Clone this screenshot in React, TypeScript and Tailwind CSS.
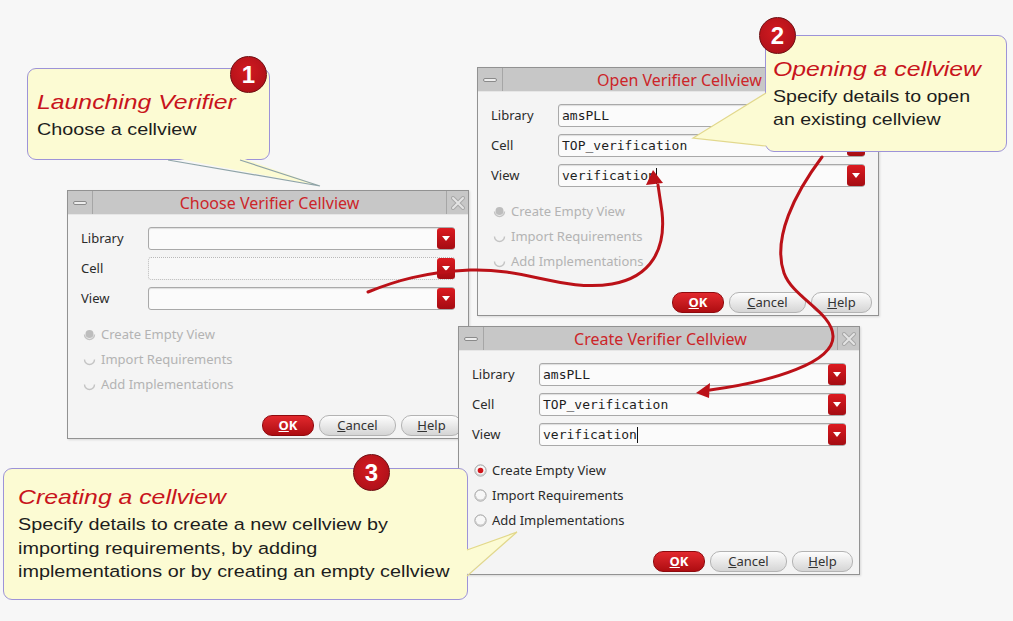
import React from "react";

type FieldProps = { label: string; value?: string; cursor?: boolean; dotted?: boolean };

function Field({ label, value, cursor, dotted }: FieldProps) {
  return (
    <div className="flex h-[23px] items-center">
      <div className="w-[67px] text-[13px] leading-none text-[#2b2b2b]">{label}</div>
      <div
        className={
          dotted
            ? "flex h-[23px] flex-1 items-center rounded-[3px] border border-dotted border-[#b8b8b8] bg-[#f8f8f8] pl-[3px]"
            : "flex h-[23px] flex-1 items-center rounded-[3px] border border-[#a9a9a9] bg-[#fbfbfb] pl-[3px] shadow-[inset_0_1px_1px_rgba(0,0,0,0.12)]"
        }
      >
        <span className="whitespace-pre font-['DejaVu_Sans_Mono',monospace] text-[13px] leading-none text-[#1e1e1e]">
          {value}
        </span>
        {cursor && <span className="h-[16px] w-px bg-[#111]" />}
        <div className="ml-auto mr-[-1px] flex h-[21px] w-[18px] items-center justify-center rounded-[3px] bg-linear-to-b from-[#dc1a20] to-[#a50c12]">
          <svg width="8" height="5" viewBox="0 0 8 5">
            <path d="M0 0H8L4 5Z" fill="#fff" />
          </svg>
        </div>
      </div>
    </div>
  );
}

function RadioIcon({ selected, disabled }: { selected?: boolean; disabled?: boolean }) {
  if (disabled) {
    return (
      <svg width="13" height="13" viewBox="0 0 13 13">
        <path d="M1.5 6.5 A5 5 0 0 0 11.5 6.5" fill="none" stroke="#c4c4c4" strokeWidth="1.4" />
        {selected && <circle cx="6.5" cy="6" r="4" fill="#bdbdbd" />}
      </svg>
    );
  }
  return (
    <svg width="13" height="13" viewBox="0 0 13 13">
      <circle cx="6.5" cy="6.5" r="5.6" fill="#f7f7f7" stroke="#9c9c9c" strokeWidth="1" />
      <path d="M1.6 7.2 A5 5 0 0 0 11.4 7.2" fill="none" stroke="#c9c9c9" strokeWidth="1.2" />
      {selected && <circle cx="6.5" cy="6.5" r="2.8" fill="#d0141a" />}
    </svg>
  );
}

function Radio({ label, selected, disabled }: { label: string; selected?: boolean; disabled?: boolean }) {
  return (
    <div className="flex h-[25px] items-center pl-[2px]">
      <RadioIcon selected={selected} disabled={disabled} />
      <span
        className={
          disabled
            ? "ml-[5px] text-[13px] leading-none text-[#b3b3b3]"
            : "ml-[5px] text-[13px] leading-none text-[#2b2b2b]"
        }
      >
        {label}
      </span>
    </div>
  );
}

function TitleBar({ title }: { title: string }) {
  return (
    <div className="flex h-[24px] border-b border-[#e6e6e6] bg-[#c7c7c7]">
      <div className="flex w-[25px] items-center justify-center border-r border-[#a6a6a6]">
        <div className="h-[4px] w-[14px] rounded-[2px] border border-[#8a8a8a] bg-[#ededed]" />
      </div>
      <div className="flex flex-1 items-center justify-center text-[16px] leading-none text-[#cc2529]">
        {title}
      </div>
      <div className="flex w-[22px] items-center justify-center border-l border-[#a6a6a6]">
        <svg width="14" height="14" viewBox="0 0 14 14">
          <path d="M2 2L12 12M12 2L2 12" stroke="#a9a9a9" strokeWidth="4" strokeLinecap="round" />
          <path d="M2 2L12 12M12 2L2 12" stroke="#e4e4e4" strokeWidth="2" strokeLinecap="round" />
        </svg>
      </div>
    </div>
  );
}

type DialogProps = {
  pos: string;
  title: string;
  lib?: string;
  cell?: string;
  view?: string;
  enabled?: boolean;
  cursor?: boolean;
  dottedCell?: boolean;
};

function Dialog({ pos, title, lib, cell, view, enabled, cursor, dottedCell }: DialogProps) {
  return (
    <div
      className={
        "absolute flex h-[249px] w-[402px] flex-col border border-[#929292] bg-[#f4f4f4] shadow-[1px_1px_2px_rgba(0,0,0,0.12)] " +
        pos
      }
    >
      <TitleBar title={title} />
      <div className="flex flex-1 flex-col px-[13px] pt-[12px]">
        <div className="flex flex-col gap-[7px]">
          <Field label="Library" value={lib} />
          <Field label="Cell" value={cell} dotted={dottedCell} />
          <Field label="View" value={view} cursor={cursor} />
        </div>
        <div className="mt-[12px] flex flex-col">
          <Radio label="Create Empty View" selected disabled={!enabled} />
          <Radio label="Import Requirements" disabled={!enabled} />
          <Radio label="Add Implementations" disabled={!enabled} />
        </div>
        <div className="mb-[2px] mr-[-7px] mt-auto flex justify-end gap-[5px]">
          <button className="flex h-[21px] w-[52px] items-center justify-center rounded-[10px] border border-[#8e0a0e] bg-linear-to-b from-[#e2282d] to-[#ae0c11] text-[13px] font-bold leading-none text-white">
            <span className="underline">O</span>K
          </button>
          <button className="flex h-[21px] w-[77px] items-center justify-center rounded-[10px] border border-[#b3b3b3] bg-linear-to-b from-[#fdfdfd] to-[#d5d5d5] text-[13px] leading-none text-[#333]">
            <span className="underline">C</span>ancel
          </button>
          <button className="flex h-[21px] w-[61px] items-center justify-center rounded-[10px] border border-[#b3b3b3] bg-linear-to-b from-[#fdfdfd] to-[#d5d5d5] text-[13px] leading-none text-[#333]">
            <span className="underline">H</span>elp
          </button>
        </div>
      </div>
    </div>
  );
}

function Badge({ pos, n }: { pos: string; n: string }) {
  return (
    <div
      className={
        "absolute flex h-[37px] w-[37px] items-center justify-center rounded-full border border-[#6e0d10] bg-[radial-gradient(circle_at_45%_40%,#d21a20,#b3121a_70%,#8c0c12)] font-['Liberation_Sans',Arial,sans-serif] text-[24px] font-bold leading-none text-white " +
        pos
      }
    >
      {n}
    </div>
  );
}

export default function App() {
  const callout = "absolute rounded-[9px] border border-[#9d93d8] bg-[#fcfbd3]";
  return (
    <div className="relative h-[621px] w-[1013px] overflow-hidden bg-[#f7f7f7] font-['Noto_Sans',sans-serif]">
      <Dialog pos="left-[67px] top-[190px]" title="Choose Verifier Cellview" dottedCell />
      <Dialog
        pos="left-[477px] top-[67px]"
        title="Open Verifier Cellview"
        lib="amsPLL"
        cell="TOP_verification"
        view="verification"
        cursor
      />
      <Dialog
        pos="left-[458px] top-[326px]"
        title="Create Verifier Cellview"
        lib="amsPLL"
        cell="TOP_verification"
        view="verification"
        cursor
        enabled
      />

      {/* Callout 1 */}
      <div className={callout + " left-[27px] top-[68px] h-[92px] w-[243px] pl-[9px] pt-[20px]"}>
        <div className="origin-left scale-x-[1.18] whitespace-nowrap font-['Liberation_Sans',Arial,sans-serif]">
          <div className="text-[21px] italic leading-[26px] text-[#c8141c]">Launching Verifier</div>
          <div className="mt-[3px] text-[16.8px] leading-[23px] text-[#1d1d1d]">Choose a cellview</div>
        </div>
      </div>

      {/* Callout 2 */}
      <div className={callout + " left-[765px] top-[35px] h-[117px] w-[242px] pl-[7px] pt-[20px]"}>
        <div className="origin-left scale-x-[1.18] whitespace-nowrap font-['Liberation_Sans',Arial,sans-serif]">
          <div className="text-[21px] italic leading-[26px] text-[#c8141c]">Opening a cellview</div>
          <div className="mt-[3px] text-[16.6px] leading-[23px] text-[#1d1d1d]">
            Specify details to open
            <br />
            an existing cellview
          </div>
        </div>
      </div>

      {/* Callout 3 */}
      <div className={callout + " left-[3px] top-[468px] h-[132px] w-[465px] pl-[14px] pt-[15px]"}>
        <div className="origin-left scale-x-[1.18] whitespace-nowrap font-['Liberation_Sans',Arial,sans-serif]">
          <div className="text-[21px] italic leading-[26px] text-[#c8141c]">Creating a cellview</div>
          <div className="mt-[3px] text-[16.8px] leading-[23.5px] text-[#1d1d1d]">
            Specify details to create a new cellview by
            <br />
            importing requirements, by adding
            <br />
            implementations or by creating an empty cellview
          </div>
        </div>
      </div>

      {/* tails and arrows */}
      <svg className="absolute left-0 top-0" width="1013" height="621" viewBox="0 0 1013 621">
        <polygon points="169,157 239,157 320,186" fill="#fcfbd3" />
        <path d="M168 160L320 186M240 160L320 186" stroke="#8fa4a8" strokeWidth="1.2" fill="none" />
        <polygon points="768,92 693,138 768,146" fill="#fcfbd3" />
        <path d="M766 93L693 138L766 146" stroke="#e2d88c" strokeWidth="1.2" fill="none" />
        <polygon points="465,550 517,532 465,576" fill="#fcfbd3" />
        <path d="M467 550L517 532L467 576" stroke="#e2d88c" strokeWidth="1.2" fill="none" />

        <path
          d="M368 292 C395 281 425 272 470 270 C525 268 565 292 612 284 C652 277 666 248 662 212 L658 185"
          stroke="#bb1118"
          strokeWidth="3"
          fill="none"
          strokeLinecap="round"
        />
        <polygon points="653,170 646,185 663,183" fill="#bb1118" />

        <path
          d="M822 157 C795 193 772 238 784 273 C793 298 832 312 833 336 C834 362 775 381 710 390"
          stroke="#bb1118"
          strokeWidth="3"
          fill="none"
          strokeLinecap="round"
        />
        <polygon points="696,393 710,383 709,398" fill="#bb1118" />
      </svg>

      <Badge pos="left-[230px] top-[56px]" n="1" />
      <Badge pos="left-[759px] top-[17px]" n="2" />
      <Badge pos="left-[353px] top-[454px]" n="3" />
    </div>
  );
}
